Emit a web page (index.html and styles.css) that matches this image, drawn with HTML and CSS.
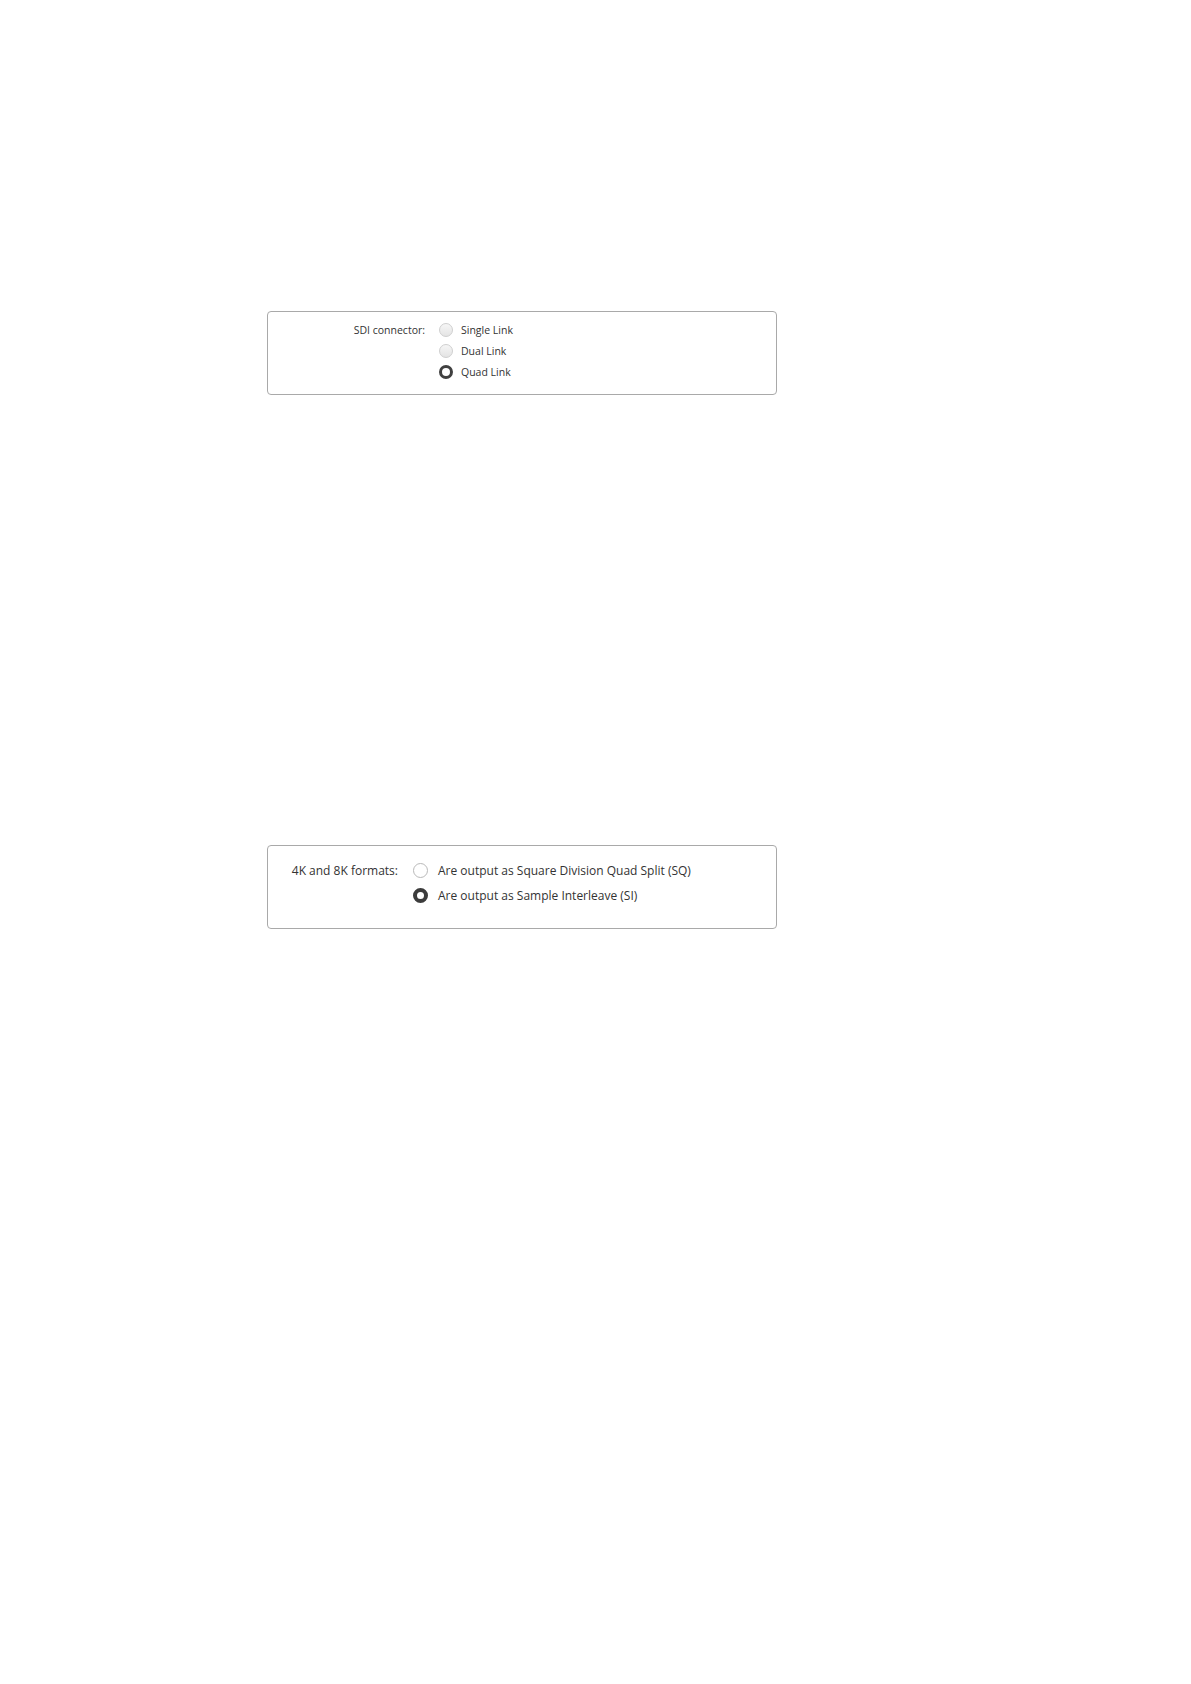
FILE: index.html
```html
<!DOCTYPE html>
<html lang="en">
<head>
<meta charset="utf-8">
<title>Settings</title>
<link rel="stylesheet" href="styles.css">
</head>
<body>
<main class="page">
  <section class="panel panel-sdi">
    <div class="label">SDI connector:</div>
    <ul class="options">
      <li class="option"><span class="radio radio-soft"></span><span class="text">Single Link</span></li>
      <li class="option"><span class="radio radio-soft"></span><span class="text">Dual Link</span></li>
      <li class="option"><span class="radio radio-on"></span><span class="text">Quad Link</span></li>
    </ul>
  </section>
  <section class="panel panel-formats">
    <div class="label">4K and 8K formats:</div>
    <ul class="options">
      <li class="option"><span class="radio radio-off"></span><span class="text">Are output as Square Division Quad Split (SQ)</span></li>
      <li class="option"><span class="radio radio-on"></span><span class="text">Are output as Sample Interleave (SI)</span></li>
    </ul>
  </section>
</main>
</body>
</html>
```

FILE: styles.css
```css
html, body {
  margin: 0;
  padding: 0;
  background: #ffffff;
}

body {
  font-family: "Open Sans", "Noto Sans", "Liberation Sans", sans-serif;
  color: #333333;
}

.page {
  display: flex;
  flex-direction: column;
  align-items: flex-start;
  padding: 311px 0 0 267px;
  gap: 450px;
}

.panel {
  box-sizing: border-box;
  width: 510px;
  border: 1px solid #a9a9a9;
  border-radius: 4px;
  display: grid;
  align-items: start;
}

.panel-sdi {
  grid-template-columns: 157px 1fr;
  column-gap: 14px;
  padding: 8px 0 12px 0;
  font-size: 10.5px;
}

.panel-formats {
  grid-template-columns: 130px 1fr;
  column-gap: 15px;
  padding: 12px 0 20px 0;
  font-size: 12px;
}

.label {
  text-align: right;
  white-space: nowrap;
}

.panel-sdi .label { line-height: 21px; }
.panel-formats .label { line-height: 25px; }

.options {
  list-style: none;
  margin: 0;
  padding: 0;
}

.panel-sdi .options { margin-top: -1px; }

.option {
  display: flex;
  align-items: center;
  white-space: nowrap;
}

.panel-sdi .option { height: 21px; }
.panel-formats .option { height: 25px; }

.radio {
  box-sizing: border-box;
  flex: none;
  border-radius: 50%;
}

.panel-sdi .radio {
  width: 14px;
  height: 14px;
  margin-right: 8px;
}

.panel-formats .radio {
  width: 15px;
  height: 15px;
  margin-right: 10px;
}

.radio-soft {
  border: 1px solid #cfcfcf;
  background: linear-gradient(#f6f6f6, #e4e4e4);
}

.radio-off {
  border: 1px solid #b9b9b9;
  background: #ffffff;
}

.radio-on {
  background: #ffffff;
}

.panel-sdi .radio-on { border: 3.5px solid #404040; }
.panel-formats .radio-on { border: 4px solid #3c3c3c; }
```
